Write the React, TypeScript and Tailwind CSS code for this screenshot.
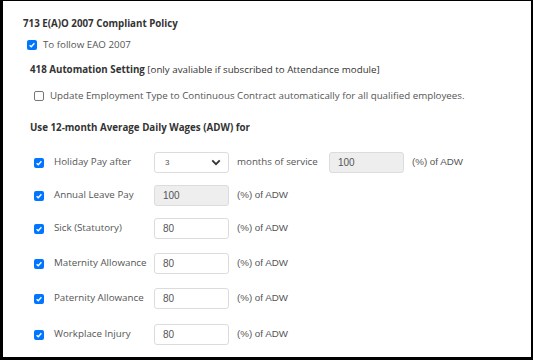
const rows = [
  { label: "Holiday Pay after", value: "3", kind: "select", top: "mt-[16px]" },
  { label: "Annual Leave Pay", value: "100", kind: "grey", top: "mt-[12px]" },
  { label: "Sick (Statutory)", value: "80", kind: "input", top: "mt-[12px]" },
  { label: "Maternity Allowance", value: "80", kind: "input", top: "mt-[14px]" },
  { label: "Paternity Allowance", value: "80", kind: "input", top: "mt-[14px]" },
  { label: "Workplace Injury", value: "80", kind: "input", top: "mt-[15px]" },
];

function Check({ checked }: { checked: boolean }) {
  if (!checked) {
    return <span className="block h-[10px] w-[10px] shrink-0 rounded-[2px] border border-[#767676] bg-white" />;
  }
  return (
    <span className="flex h-[10px] w-[10px] shrink-0 items-center justify-center rounded-[2px] bg-[#0075ff]">
      <svg viewBox="0 0 10 10" className="h-[8px] w-[8px]">
        <path d="M2 5.2 L4.1 7.2 L8 2.8" fill="none" stroke="white" strokeWidth="1.7" />
      </svg>
    </span>
  );
}

function Box({ kind, value }: { kind: string; value: string }) {
  if (kind === "select") {
    return (
      <div className="flex h-[21px] w-[75px] shrink-0 items-center justify-between rounded-[3px] border border-[#dcdcdc] bg-white pl-[10px] pr-[7px]">
        <span className="font-['Liberation_Sans',sans-serif] text-[8px] text-[#555]">{value}</span>
        <svg viewBox="0 0 12 8" className="h-[7px] w-[10px]">
          <path d="M1.5 1.5 L6 6 L10.5 1.5" fill="none" stroke="#333" strokeWidth="2.2" />
        </svg>
      </div>
    );
  }
  return (
    <div
      className={`flex h-[21px] w-[75px] shrink-0 items-center rounded-[3px] border border-[#dcdcdc] pl-[8px] font-['Liberation_Sans',sans-serif] text-[10px] text-[#555] ${
        kind === "grey" ? "bg-[#eeeeee]" : "bg-white"
      }`}
    >
      {value}
    </div>
  );
}

export default function App() {
  return (
    <div className="h-[360px] w-[533px] overflow-hidden border-t border-l-[3px] border-r-2 border-b-[3px] border-black bg-white font-['Open_Sans',sans-serif] text-[9.75px] text-[#555]">
      <div className="pt-[15px] pl-[20px] font-bold leading-[16px] text-[#333]">713 E(A)O 2007 Compliant Policy</div>

      <div className="mt-[5px] flex h-[16px] items-center pl-[24px]">
        <Check checked />
        <span className="ml-[6px]">To follow EAO 2007</span>
      </div>

      <div className="mt-[9px] pl-[27px] leading-[16px] text-[#333]">
        <span className="font-bold">418 Automation Setting</span> [only avaliable if subscribed to Attendance module]
      </div>

      <div className="mt-[10px] flex h-[16px] items-center pl-[31px]">
        <Check checked={false} />
        <span className="ml-[6px]">Update Employment Type to Continuous Contract automatically for all qualified employees.</span>
      </div>

      <div className="mt-[16px] pl-[27px] font-bold leading-[16px] text-[#333]">Use 12-month Average Daily Wages (ADW) for</div>

      {rows.map((r) => (
        <div key={r.label} className={`${r.top} flex items-center pl-[31px]`}>
          <Check checked />
          <span className="ml-[10px] w-[100px] whitespace-nowrap">{r.label}</span>
          <Box kind={r.kind} value={r.value} />
          {r.kind === "select" ? (
            <>
              <span className="ml-[8px] w-[81px] whitespace-nowrap">months of service</span>
              <div className="ml-[11px]">
                <Box kind="grey" value="100" />
              </div>
              <span className="ml-[8px] font-['Liberation_Sans',sans-serif]">(%) of ADW</span>
            </>
          ) : (
            <span className="ml-[8px] font-['Liberation_Sans',sans-serif]">(%) of ADW</span>
          )}
        </div>
      ))}
    </div>
  );
}
